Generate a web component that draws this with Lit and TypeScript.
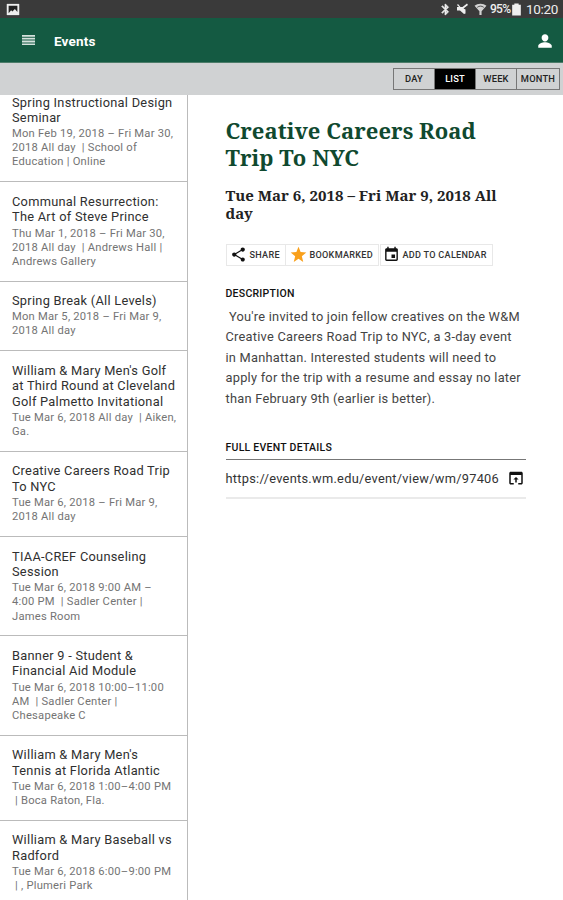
import { LitElement, html, css, svg } from "lit";
import { customElement } from "lit/decorators.js";

interface EventItem {
  title: string[];
  meta: string[];
}

const EVENTS: EventItem[] = [
  { title: ["Spring Instructional Design", "Seminar"], meta: ["Mon Feb 19, 2018 – Fri Mar 30,", "2018 All day \u00a0| School of", "Education | Online"] },
  { title: ["Communal Resurrection:", "The Art of Steve Prince"], meta: ["Thu Mar 1, 2018 – Fri Mar 30,", "2018 All day \u00a0| Andrews Hall |", "Andrews Gallery"] },
  { title: ["Spring Break (All Levels)"], meta: ["Mon Mar 5, 2018 – Fri Mar 9,", "2018 All day"] },
  { title: ["William & Mary Men's Golf", "at Third Round at Cleveland", "Golf Palmetto Invitational"], meta: ["Tue Mar 6, 2018 All day \u00a0| Aiken,", "Ga."] },
  { title: ["Creative Careers Road Trip", "To NYC"], meta: ["Tue Mar 6, 2018 – Fri Mar 9,", "2018 All day"] },
  { title: ["TIAA-CREF Counseling", "Session"], meta: ["Tue Mar 6, 2018 9:00 AM –", "4:00 PM \u00a0| Sadler Center |", "James Room"] },
  { title: ["Banner 9 - Student &", "Financial Aid Module"], meta: ["Tue Mar 6, 2018 10:00–11:00", "AM \u00a0| Sadler Center |", "Chesapeake C"] },
  { title: ["William & Mary Men's", "Tennis at Florida Atlantic"], meta: ["Tue Mar 6, 2018 1:00–4:00 PM", "\u00a0| Boca Raton, Fla."] },
  { title: ["William & Mary Baseball vs", "Radford"], meta: ["Tue Mar 6, 2018 6:00–9:00 PM", "\u00a0| , Plumeri Park"] },
];

const ICONS = {
  picture: svg`<path fill="#eee" d="M2 3h20v18H2z"/><path fill="#222" d="M5 6h14v10l-4-5-4 4-2-2-4 5z"/>`,
  bluetooth: svg`<path stroke="currentColor" stroke-width="1.2" d="M17.7 7.7 12 2h-1v7.6L6.4 5 5 6.4l5.6 5.6L5 17.6 6.4 19l4.6-4.6V22h1l5.7-5.7-4.3-4.3zM13 5.8l1.9 1.9L13 9.6zm1.9 10.5L13 18.2v-3.8z"/>`,
  mute: svg`<path d="M1 8v7h6l8 7 3-1v-8l-4-2 9-7-2-3-9 7H8L3 2 1 4l4 4z"/>`,
  wifi: svg`<path d="M1 5c6-5 16-5 22 0l-9 10v7h-4v-7z" opacity=".85"/><path d="M6 8c4-3 8-3 12 0" fill="none" stroke="#333" stroke-width="1.5"/>`,
  battery: svg`<path d="M4 3h4V1h8v2h4v20H4z"/>`,
  menu: svg`<path d="M2 2h20v3.6H2zM2 7.6h20v3.6H2zM2 13.2h20v3.6H2zM2 18.8h20V22H2z"/>`,
  person: svg`<path d="M12 12.5c2.6 0 4.5-2.3 4.5-4.9S14.6 3 12 3 7.5 5 7.5 7.6s1.9 4.9 4.5 4.9zm0 1c-3.3 0-9 1.900-9 4.900V21h18v-2.600c0-3-5.700-4.900-9-4.900z"/>`,
  share: svg`<path d="M18 16.080c-.76 0-1.440.3-1.960.77L8.910 12.700c.05-.23.09-.46.09-.7s-.04-.47-.09-.7l7.050-4.110c.54.5 1.250.81 2.040.81 1.660 0 3-1.340 3-3s-1.340-3-3-3-3 1.340-3 3c0 .24.04.47.09.7L8.040 9.810C7.500 9.310 6.790 9 6 9c-1.660 0-3 1.340-3 3s1.340 3 3 3c.79 0 1.500-.31 2.040-.81l7.120 4.160c-.05.21-.08.43-.08.65 0 1.610 1.310 2.920 2.920 2.920s2.920-1.310 2.920-2.920-1.310-2.920-2.920-2.920z"/>`,
  star: svg`<path d="M12 17.900 18.700 22.500l-2-8L23 9.200l-8-.7L12 1 9 8.500l-8 .7 6.300 5.300-2 8z"/>`,
  calendar: svg`<path d="M17 12h-5v5h5zM16 1v2H8V1H6v2H5c-1.110 0-1.990.9-1.990 2L3 19c0 1.100.89 2 2 2h14c1.100 0 2-.9 2-2V5c0-1.100-.9-2-2-2h-1V1zm3 18H5V8h14z"/>`,
  open: svg`<path d="M19 3.500H5c-1.110 0-2 .9-2 2v13c0 1.100.89 2 2 2h4v-2H5V8h14v10.500h-4v2h4c1.100 0 2-.9 2-2v-13c0-1.100-.89-2-2-2zM12 10.500l-3.500 3.500H11v4h2v-4h2.500z"/>`,
};

const icon = (name: keyof typeof ICONS, cls: string) =>
  html`<svg class="icon ${cls}" viewBox="0 0 24 24" aria-hidden="true">${ICONS[name]}</svg>`;

@customElement("app-root")
export class AppRoot extends LitElement {
  static styles = css`
    :host { display: flex; flex-direction: column; width: 563px; height: 900px; overflow: hidden; background: #fff; font-family: Roboto, "Liberation Sans", sans-serif; color: #222; }
    * { box-sizing: border-box; }
    .icon { display: block; flex: none; fill: currentColor; }
    .status { height: 18px; flex: none; display: flex; align-items: center; background: #3a3a3a; color: #eee; padding: 0 5px 0 5px; font-size: 12px; }
    .s-picture { width: 16px; height: 15px; margin-right: auto; }
    .s-bt { width: 13px; height: 13px; margin-right: 4px; }
    .s-mute { width: 13px; height: 12px; margin-right: 5px; }
    .s-wifi { width: 13px; height: 13px; margin-right: 3px; }
    .s-batt { width: 13px; height: 13px; margin: 0 3px 0 -2px; }
    .pct { width: 22px; white-space: nowrap; font-size: 12px; letter-spacing: -0.7px; font-weight: 500; }
    .clock { font-size: 13.5px; width: 32px; letter-spacing: -0.35px; white-space: nowrap; }
    .bar { height: 45px; flex: none; display: flex; align-items: center; background: #145a42; color: #fff; padding: 0 9px 0 20px; border-bottom: 1px solid #4c7c69; }
    .b-menu { width: 17px; height: 12px; color: #d5e2dd; margin: 0 17px 0 0; transform: scaleX(1.3); }
    .b-title { font-size: 13.5px; font-weight: 700; flex: 1; letter-spacing: 0.2px; padding-top: 1px; }
    .b-person { width: 18px; height: 18px; margin-top: 1px; }
    .tools { height: 32px; flex: none; display: flex; justify-content: flex-end; align-items: center; background: #d0d2d3; padding: 0 3px 1px 0; }
    .seg { display: flex; height: 22px; border: 1px solid #777; }
    .seg span { display: flex; align-items: center; justify-content: center; font-size: 9.3px; font-weight: 500; letter-spacing: 0.2px; width: 41px; border-right: 1px solid #777; color: #222; }
    .seg span:last-child { border-right: 0; width: 42px; }
    .seg .on { background: #000; color: #fff; }
    .body { flex: 1; min-height: 0; display: flex; }
    .list { width: 188px; flex: none; border-right: 1px solid #bbb; overflow: hidden; display: flex; flex-direction: column; justify-content: flex-end; }
    .item { flex: none; padding: 11.6px 0 11.7px 12px; border-bottom: 1px solid #bbb; white-space: nowrap; }
    .item:last-child { border-bottom: 0; padding-bottom: 6.8px; }
    .title { font-size: 12.8px; line-height: 15.4px; letter-spacing: 0.27px; color: #303030; margin-bottom: 1.9px; }
    .meta { font-size: 11.2px; line-height: 14.1px; letter-spacing: 0.23px; color: #747474; }
    .detail { flex: 1; padding: 21.5px 37px 0 37.5px; white-space: nowrap; }
    h1 { margin: 0; font: 700 22px/27px "Noto Serif", "DejaVu Serif", serif; letter-spacing: 0.05px; color: #10492f; }
    h2 { margin: 15px 0 0; font: 700 15px/18.7px "Noto Serif", "DejaVu Serif", serif; color: #222; }
    .actions { display: flex; margin-top: 21px; height: 22px; width: 267px; }
    .action { display: flex; align-items: center; border: 1px solid #e8e8e8; font-size: 9.1px; font-weight: 500; letter-spacing: 0.28px; padding-left: 4px; gap: 2px; color: #333; }
    .a-share { width: 60px; }
    .a-book { width: 93px; border-left: 0; gap: 3px; }
    .a-cal { width: 113px; margin-left: 1px; padding-left: 2px; gap: 3px; }
    .i-act { width: 17px; height: 17px; color: #111; }
    .a-share .i-act { margin-left: -1px; margin-right: 1px; }
    .i-star { color: #f9a01b; }
    h3 { margin: 0; font-size: 10.5px; line-height: 14px; font-weight: 500; letter-spacing: 0.25px; color: #111; }
    .h-desc { margin-top: 21px; }
    .desc { margin: 6px 0 0; font-size: 12.8px; line-height: 20.4px; letter-spacing: 0.25px; color: #444; }
    .h-full { margin-top: 32px; padding-bottom: 4px; border-bottom: 1px solid #777; }
    .link { display: flex; align-items: center; justify-content: space-between; height: 39.5px; padding-bottom: 1px; border-bottom: 2px solid #eaeaea; font-size: 12.8px; letter-spacing: 0.28px; color: #333; }
    .i-open { width: 18px; height: 18px; color: #111; margin-right: 1px; }
  `;

  render() {
    const lines = (a: string[]) => a.map((l) => html`<div>${l}</div>`);
    return html`
      <div class="status">
        ${icon("picture", "s-picture")}${icon("bluetooth", "s-bt")}${icon("mute", "s-mute")}${icon("wifi", "s-wifi")}
        <span class="pct">95%</span>${icon("battery", "s-batt")}<span class="clock">10:20</span>
      </div>
      <div class="bar">${icon("menu", "b-menu")}<span class="b-title">Events</span>${icon("person", "b-person")}</div>
      <div class="tools">
        <div class="seg"><span>DAY</span><span class="on">LIST</span><span>WEEK</span><span>MONTH</span></div>
      </div>
      <div class="body">
        <div class="list">
          ${EVENTS.map((e) => html`<div class="item"><div class="title">${lines(e.title)}</div><div class="meta">${lines(e.meta)}</div></div>`)}
        </div>
        <div class="detail">
          <h1>Creative Careers Road<br />Trip To NYC</h1>
          <h2>Tue Mar 6, 2018 – Fri Mar 9, 2018 All<br />day</h2>
          <div class="actions">
            <div class="action a-share">${icon("share", "i-act")}SHARE</div>
            <div class="action a-book">${icon("star", "i-act i-star")}BOOKMARKED</div>
            <div class="action a-cal">${icon("calendar", "i-act")}ADD TO CALENDAR</div>
          </div>
          <h3 class="h-desc">DESCRIPTION</h3>
          <div class="desc">
            ${lines([
              "\u00a0You're invited to join fellow creatives on the W&M",
              "Creative Careers Road Trip to NYC, a 3-day event",
              "in Manhattan. Interested students will need to",
              "apply for the trip with a resume and essay no later",
              "than February 9th (earlier is better).",
            ])}
          </div>
          <h3 class="h-full">FULL EVENT DETAILS</h3>
          <div class="link"><span>https://events.wm.edu/event/view/wm/97406</span>${icon("open", "i-open")}</div>
        </div>
      </div>
    `;
  }
}
